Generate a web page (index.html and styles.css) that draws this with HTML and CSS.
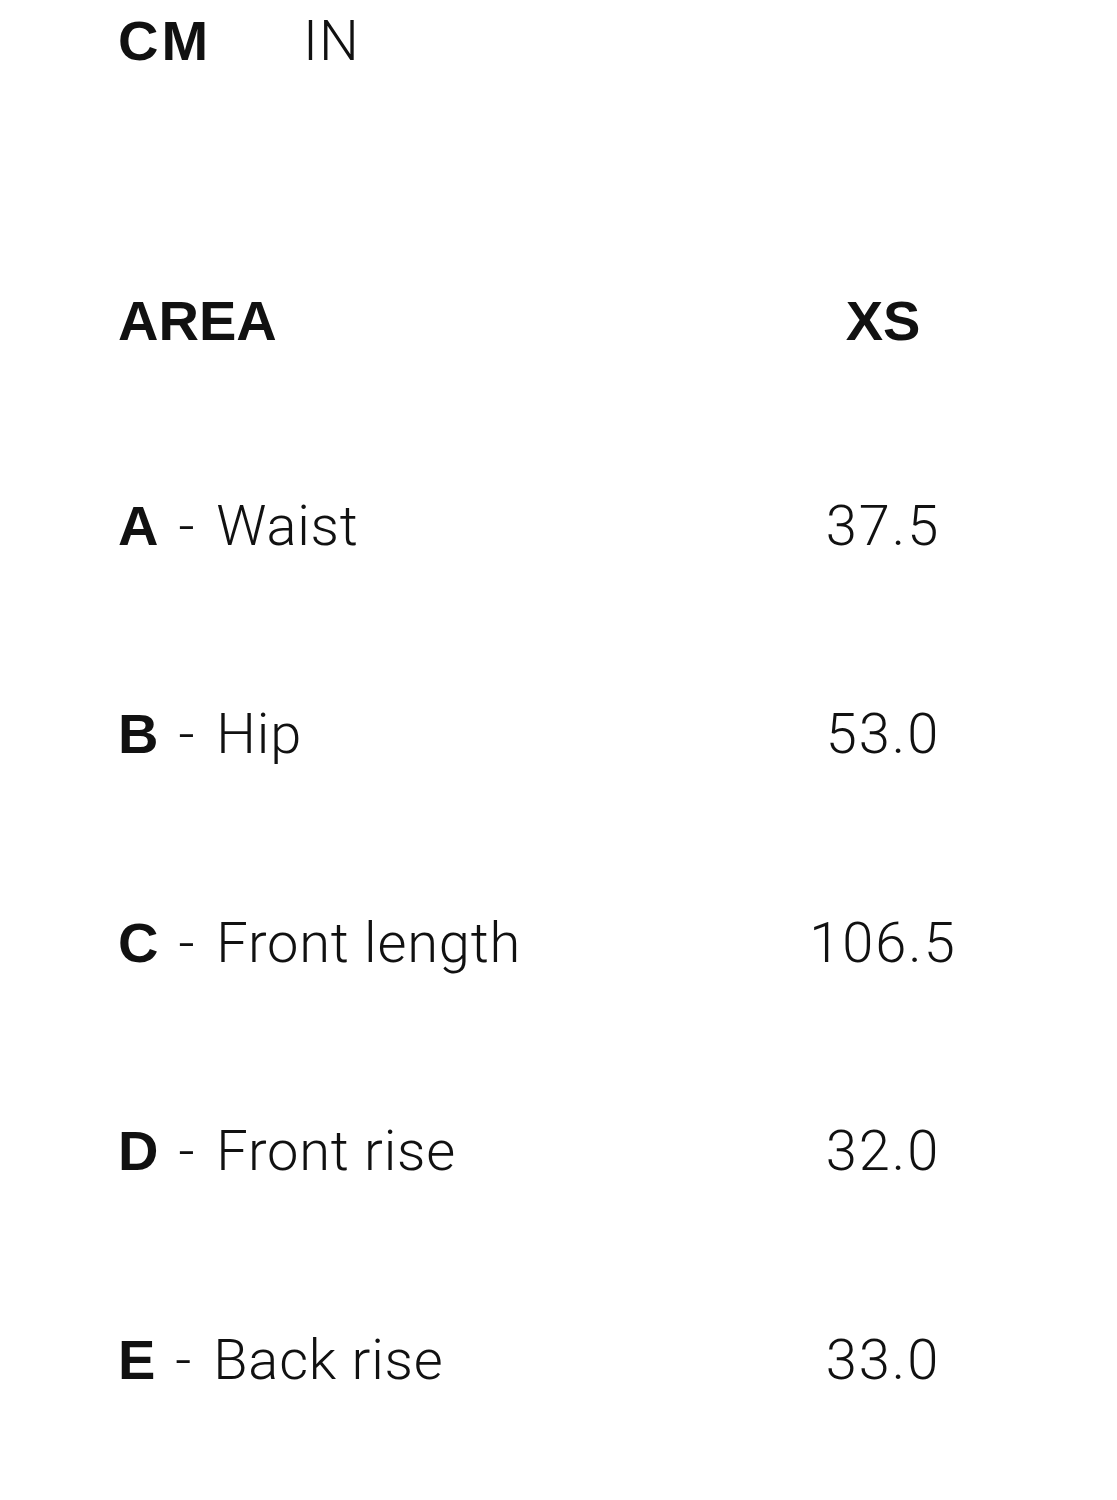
FILE: index.html
```html
<!DOCTYPE html>
<html lang="en">
<head>
<meta charset="utf-8">
<title>Size guide</title>
<link rel="stylesheet" href="styles.css">
</head>
<body>
<main class="guide">
  <div class="units">
    <span class="unit unit-active">CM</span>
    <span class="unit">IN</span>
  </div>
  <div class="table">
    <div class="head">AREA</div>
    <div class="head val">XS</div>

    <div class="label"><b>A</b><span class="dash">-</span>Waist</div>
    <div class="val num">37.5</div>

    <div class="label"><b>B</b><span class="dash">-</span>Hip</div>
    <div class="val num">53.0</div>

    <div class="label"><b>C</b><span class="dash">-</span>Front length</div>
    <div class="val num">106.5</div>

    <div class="label"><b>D</b><span class="dash">-</span>Front rise</div>
    <div class="val num">32.0</div>

    <div class="label"><b>E</b><span class="dash">-</span>Back rise</div>
    <div class="val num">33.0</div>
  </div>
</main>
</body>
</html>
```
FILE: styles.css
```css
html, body {
  margin: 0;
  padding: 0;
  background: #fff;
}
body {
  font-family: "Liberation Sans", Arial, sans-serif;
  color: #111;
}
.guide {
  padding: 13px 134px 0 118px;
}
.units {
  display: flex;
  gap: 92px;
  font-size: 56px;
  line-height: 56px;
  height: 56px;
}
.unit {
  font-family: "Roboto", "Liberation Sans", sans-serif;
  font-weight: 300;
  letter-spacing: 1px;
}
.unit-active {
  font-family: "Liberation Sans", Arial, sans-serif;
  font-weight: 700;
  letter-spacing: 3px;
}
.table {
  margin-top: 224px;
  display: grid;
  grid-template-columns: 1fr 200px;
  grid-template-rows: 52px;
  grid-auto-rows: 56px;
  row-gap: 152.5px;
  font-size: 56px;
  line-height: 56px;
}
.head {
  font-weight: 700;
  white-space: nowrap;
}
.val {
  text-align: center;
}
.label {
  font-family: "Roboto", "Liberation Sans", sans-serif;
  font-weight: 300;
  letter-spacing: 0.8px;
  white-space: nowrap;
}
.label b {
  font-family: "Liberation Sans", Arial, sans-serif;
  font-weight: 700;
  letter-spacing: 0;
}
.dash {
  display: inline-block;
  margin: 0 21px 0 20px;
}
.num {
  font-family: "Roboto", "Liberation Sans", sans-serif;
  font-weight: 300;
  letter-spacing: 2px;
}
```
